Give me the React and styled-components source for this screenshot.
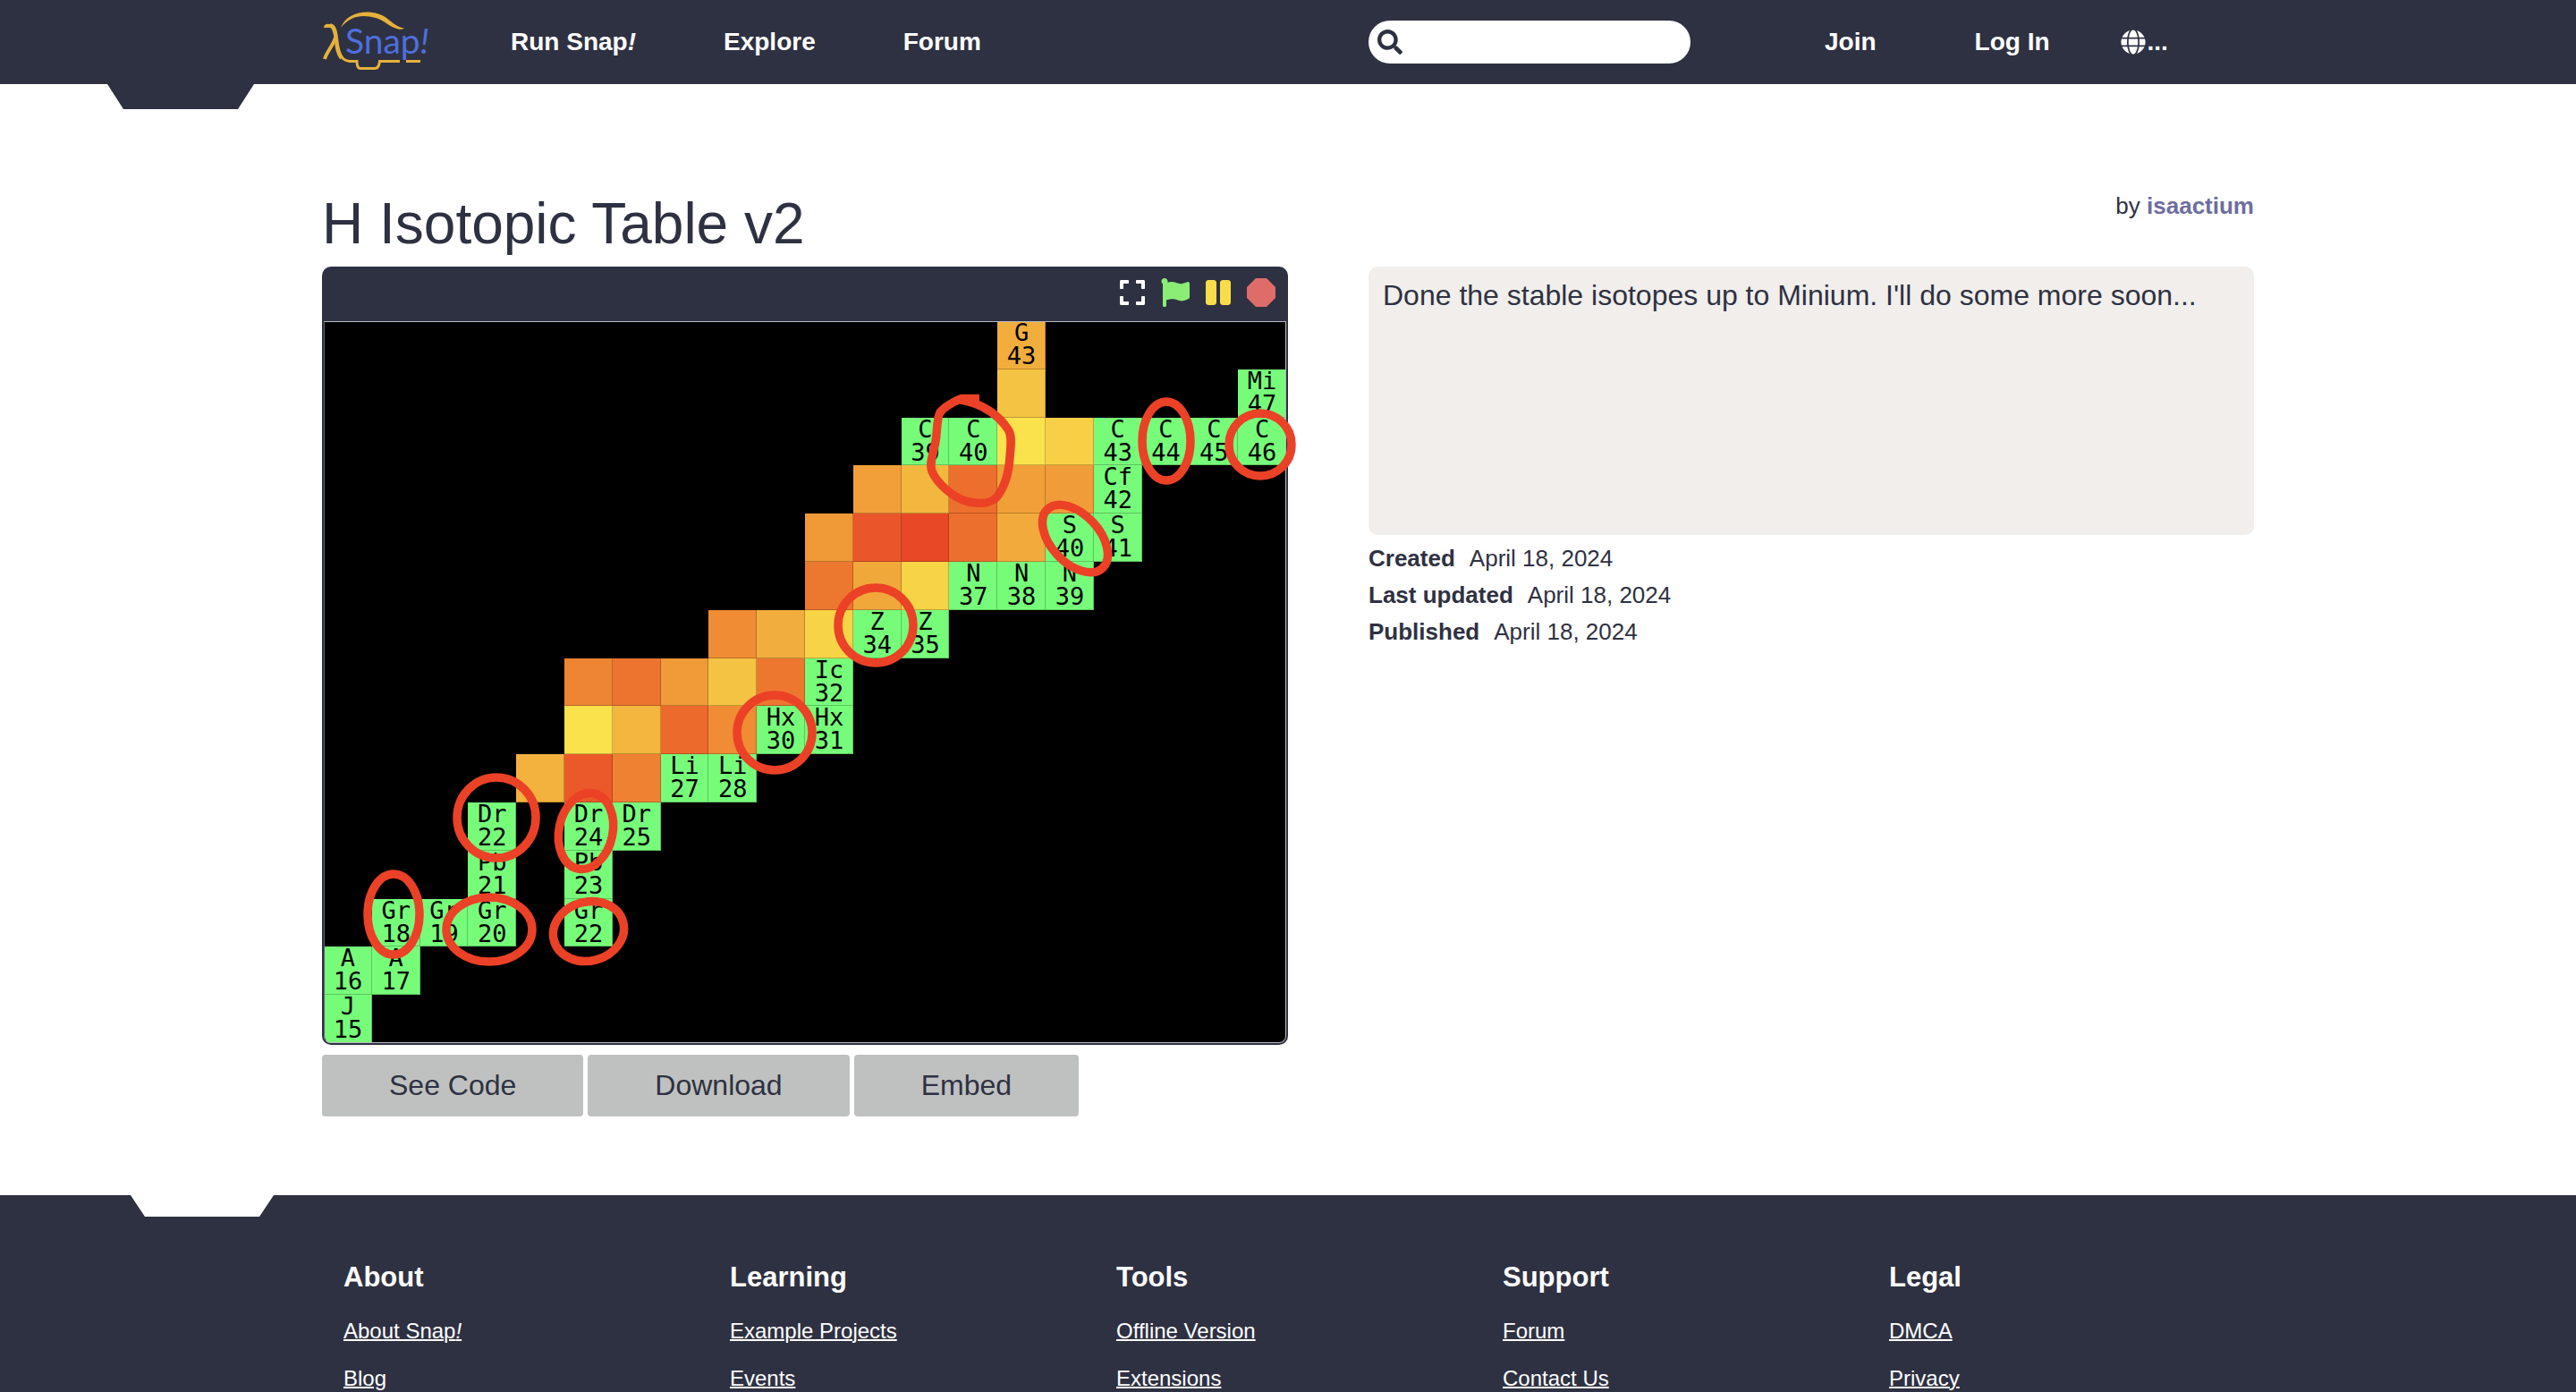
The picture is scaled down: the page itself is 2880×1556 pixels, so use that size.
import React from "react";
import styled, { createGlobalStyle } from "styled-components";
import { FaSearch, FaGlobe, FaExpand, FaFlag, FaPause } from "react-icons/fa";

const navy = "#2e3142";
const GREEN = "#77fc7a";

const GlobalStyle = createGlobalStyle`
  *, *::before, *::after { box-sizing: border-box; }
  body {
    margin: 0;
    background: #ffffff;
    color: ${navy};
    font-family: "Liberation Sans", Arial, Helvetica, sans-serif;
    font-size: 26px;
  }
  h1, h2, p, ul, dl, dd { margin: 0; padding: 0; }
  button, input { font: inherit; color: inherit; border: 0; }
`;

const Container = styled.div`
  width: 75%;
  margin: 0 auto;
`;

const Columns = styled(Container)`
  display: grid;
  grid-template-columns: 12fr 11fr;
  column-gap: 90px;
`;

/* ---------- header ---------- */

const Header = styled.header`
  position: relative;
  background: ${navy};
  color: #ffffff;
  font-size: 28px;
  font-weight: bold;

  &::after {
    content: "";
    position: absolute;
    top: 100%;
    left: 120px;
    width: 164px;
    height: 28px;
    background: ${navy};
    clip-path: polygon(0 0, 100% 0, calc(100% - 18px) 100%, 18px 100%);
  }
`;

const HeaderRow = styled(Columns)`
  height: 94px;
`;

const HeaderGroup = styled.div`
  display: flex;
  align-items: center;
`;

const LogoLink = styled.a`
  display: flex;
  margin-right: 94px;

  svg { overflow: visible; }
`;

const Nav = styled.nav`
  display: flex;
  gap: ${(p) => p.$gap};
`;

const NavLink = styled.a`
  color: #ffffff;
  text-decoration: none;
  white-space: nowrap;
`;

const SearchBox = styled.label`
  display: flex;
  align-items: center;
  width: 360px;
  height: 48px;
  padding: 0 10px;
  margin-right: 150px;
  border-radius: 24px;
  background: #ffffff;
  color: ${navy};

  svg { flex: none; }
`;

const SearchInput = styled.input`
  flex: 1;
  min-width: 0;
  padding: 0 10px;
  background: transparent;
  font-weight: normal;
  outline: none;
`;

const LanguageButton = styled.button`
  display: flex;
  align-items: center;
  gap: 2px;
  margin-left: 79px;
  padding: 0;
  background: transparent;
  color: #ffffff;
`;

/* ---------- project ---------- */

const Main = styled.main`
  padding: 118px 0 88px;
`;

const Title = styled.h1`
  margin-bottom: 10px;
  font-size: 64px;
  line-height: 76px;
  font-weight: normal;
`;

const Byline = styled.p`
  line-height: 36px;
  text-align: right;
`;

const AuthorLink = styled.a`
  color: #6e6d9f;
  font-weight: bold;
  text-decoration: none;
`;

const Player = styled.section`
  padding: 0 2px 2px;
  border-radius: 10px;
  background: ${navy};
`;

const PlayerBar = styled.div`
  display: flex;
  align-items: center;
  justify-content: flex-end;
  gap: 18px;
  height: 61px;
  padding: 0 12px 3px 0;
`;

const PlayerButton = styled.button`
  display: flex;
  padding: 0;
  background: transparent;
  color: ${(p) => p.$color};

  svg { width: ${(p) => p.$width}; height: 32px; }
`;

const Stage = styled.div`
  position: relative;
`;

const Board = styled.div`
  position: relative;
  display: grid;
  grid-template-columns: repeat(20, minmax(0, 1fr));
  grid-template-rows: repeat(15, minmax(0, 1fr));
  aspect-ratio: 4 / 3;
  border-radius: 0 0 8px 8px;
  background: #000000;

  &::after {
    content: "";
    position: absolute;
    inset: 0;
    border: 1px solid #b9babd;
    border-left-color: #5c5e66;
    border-radius: 0 0 8px 8px;
  }
`;

const Cell = styled.div`
  grid-column: ${(p) => p.$col + 1};
  grid-row: ${(p) => p.$row + 1};
  border-bottom-left-radius: ${(p) => (p.$row === 14 && p.$col === 0 ? "8px" : "0")};
  background: ${(p) => p.$color};
  box-shadow: inset -1px -1px 0 rgba(0, 0, 0, 0.22);
  color: #000000;
  font-family: "DejaVu Sans Mono", monospace;
  font-size: 27px;
  line-height: 26px;
  text-align: center;

  span { display: block; }
`;

const Marks = styled.svg`
  position: absolute;
  inset: 0;
  width: 100%;
  height: 100%;
  overflow: visible;
  pointer-events: none;
`;

const Actions = styled.div`
  display: flex;
  gap: 5px;
  margin-top: 11px;
`;

const ActionButton = styled.button`
  height: 69px;
  padding: 0 75px;
  border-radius: 4px;
  background: #bfc1c0;
  font-size: 32px;
`;

const Notes = styled.p`
  min-height: 300px;
  padding: 12px 16px;
  border-radius: 10px;
  background: #f1eeeb;
  font-size: 32px;
  line-height: 40px;
`;

const Dates = styled.dl`
  margin-top: 6px;
  line-height: 41px;
`;

const DateRow = styled.div`
  display: flex;
  gap: 16px;

  dt { font-weight: bold; }
`;

/* ---------- footer ---------- */

const Footer = styled.footer`
  position: relative;
  padding-top: 73px;
  background: ${navy};
  color: #ffffff;

  &::before {
    content: "";
    position: absolute;
    top: 0;
    left: 146px;
    width: 160px;
    height: 24px;
    background: #ffffff;
    clip-path: polygon(0 0, 100% 0, calc(100% - 16px) 100%, 16px 100%);
  }
`;

const FooterGrid = styled(Container)`
  display: grid;
  grid-template-columns: repeat(5, 1fr);
`;

const FooterColumn = styled.section`
  padding: 0 24px;
`;

const FooterHeading = styled.h2`
  margin-bottom: 27px;
  font-size: 31px;
  line-height: 37px;
`;

const FooterList = styled.ul`
  display: grid;
  gap: 23px;
  list-style: none;
  font-size: 24px;
  line-height: 30px;
`;

const FooterLink = styled.a`
  color: #ffffff;
  text-decoration: underline;
  text-decoration-thickness: 2px;
`;

/* ---------- data ---------- */

// [row, column, colour] for a plain cell, [row, column, symbol, mass] for a stable one
const heat = [
  [1, 14, "#f4c343"],
  [2, 14, "#f9e24c"], [2, 15, "#f8d045"],
  [3, 11, "#f19f38"], [3, 12, "#f3b73f"], [3, 13, "#ed6f2d"], [3, 14, "#f19f38"], [3, 15, "#f09c38"],
  [4, 10, "#ef9937"], [4, 11, "#ea562a"], [4, 12, "#e94826"], [4, 13, "#ec702d"], [4, 14, "#f1aa3b"],
  [5, 10, "#ec772f"], [5, 11, "#f1a83b"], [5, 12, "#f6d446"],
  [6, 8, "#ef8c34"], [6, 9, "#f1ae3e"], [6, 10, "#f6d446"],
  [7, 5, "#ee8533"], [7, 6, "#ec742f"], [7, 7, "#f09a38"], [7, 8, "#f4c343"], [7, 9, "#ed772f"],
  [8, 5, "#f9e24c"], [8, 6, "#f3b73f"], [8, 7, "#ec6a2c"], [8, 8, "#ef8c34"],
  [9, 4, "#f3b13e"], [9, 5, "#eb592a"], [9, 6, "#ee8132"],
];

const isotopes = [
  [0, 14, "G", 43, "#f2ae3d"],
  [1, 19, "Mi", 47],
  [2, 12, "C", 39], [2, 13, "C", 40], [2, 16, "C", 43], [2, 17, "C", 44], [2, 18, "C", 45], [2, 19, "C", 46],
  [3, 16, "Cf", 42],
  [4, 15, "S", 40], [4, 16, "S", 41],
  [5, 13, "N", 37], [5, 14, "N", 38], [5, 15, "N", 39],
  [6, 11, "Z", 34], [6, 12, "Z", 35],
  [7, 10, "Ic", 32],
  [8, 9, "Hx", 30], [8, 10, "Hx", 31],
  [9, 7, "Li", 27], [9, 8, "Li", 28],
  [10, 3, "Dr", 22], [10, 5, "Dr", 24], [10, 6, "Dr", 25],
  [11, 3, "Pb", 21], [11, 5, "Pb", 23],
  [12, 1, "Gr", 18], [12, 2, "Gr", 19], [12, 3, "Gr", 20], [12, 5, "Gr", 22],
  [13, 0, "A", 16], [13, 1, "A", 17],
  [14, 0, "J", 15],
];

// centre x, centre y, radius x, radius y, tilt
const rings = [
  [942, 134, 27, 44, 0],
  [1047, 138, 35, 35, 0],
  [840, 243, 45, 27, 47],
  [617, 340, 42, 42, 0],
  [504, 460, 42, 42, 0],
  [193, 555, 44, 45, 0],
  [293, 570, 30, 43, 12],
  [78, 663, 29, 45, 0],
  [185, 680, 48, 36, 0],
  [296, 682, 40, 33, -15],
];

const footerColumns = [
  ["About", [<>About Snap<i>!</i></>, "Blog"]],
  ["Learning", ["Example Projects", "Events"]],
  ["Tools", ["Offline Version", "Extensions"]],
  ["Support", ["Forum", "Contact Us"]],
  ["Legal", ["DMCA", "Privacy"]],
];

const dates = [
  ["Created", "April 18, 2024"],
  ["Last updated", "April 18, 2024"],
  ["Published", "April 18, 2024"],
];

function Logo() {
  return (
    <svg width="117" height="66" viewBox="0 0 117 66" role="img" aria-label="Snap!">
      <g fill="none" stroke="#e5b13c" strokeWidth="3">
        <path d="M4 17 C4 14 7 15 10 15" strokeWidth="4" />
        <path d="M8 15 C14 15 15 21 16 29 C17 42 20 54 31 54.500 H39 C39 59 40.500 62.500 43 62.500 H59 C62 62.500 64 59 64.500 54.500 H87" />
        <path d="M9 14.500 C14 15 15 22 16 30 C17 40 18 46 22 51" strokeWidth="4.500" />
        <path d="M15 28 C12 38 5 44 3 52" strokeWidth="4" />
        <path d="M94 54.500 H110" />
      </g>
      <path
        d="M21 17 C30 -5 60 -3 72 6 C80 12 85 17 92 17.500 C90 19 87 19 85 18.500 C75 16 70 9 60 6 C46 2 32 3 21 17 Z"
        fill="#e5b13c"
      />
      <text x="26" y="46" fill="#4f6fdc" fontFamily="Lato, sans-serif" fontSize="39" fontWeight="400">
        Snap<tspan fontStyle="italic">!</tspan>
      </text>
    </svg>
  );
}

function PlayerControls() {
  return (
    <PlayerBar>
      <PlayerButton type="button" aria-label="Full screen" $color="#ffffff" $width="28px"><FaExpand /></PlayerButton>
      <PlayerButton type="button" aria-label="Run" $color="#8bec76" $width="32px"><FaFlag /></PlayerButton>
      <PlayerButton type="button" aria-label="Pause" $color="#f9dc4a" $width="28px"><FaPause /></PlayerButton>
      <PlayerButton type="button" aria-label="Stop" $color="#de6c69" $width="32px">
        <svg viewBox="0 0 32 32"><path d="M10 0H22L32 10V22L22 32H10L0 22V10Z" fill="currentColor" /></svg>
      </PlayerButton>
    </PlayerBar>
  );
}

function IsotopeStage() {
  return (
    <Stage>
      <Board>
        {heat.map(([row, col, color]) => (
          <Cell key={`${row}-${col}`} $row={row} $col={col} $color={color} />
        ))}
        {isotopes.map(([row, col, symbol, mass, color = GREEN]) => (
          <Cell key={`${row}-${col}`} $row={row} $col={col} $color={color}>
            <span>{symbol}</span>
            <span>{mass}</span>
          </Cell>
        ))}
      </Board>
      <Marks viewBox="0 0 1076 807" aria-hidden="true">
        <g fill="none" stroke="#eb4126" strokeWidth="9.500">
          {rings.map(([cx, cy, rx, ry, tilt]) => (
            <ellipse key={`${cx}-${cy}`} cx={cx} cy={cy} rx={rx} ry={ry} transform={`rotate(${tilt} ${cx} ${cy})`} />
          ))}
          <path
            d="M733 86.500 H713 C706 89 693 96 689 102 C684 112 687 128 682 143 C680 153 677 160 680 168 C685 180 703 198 721 202 C735 205 747 203 753 196 C762 184 766 168 767 152 C768 140 770 128 765 121 C756 107 738 92 712 88"
            strokeLinejoin="round"
          />
        </g>
      </Marks>
    </Stage>
  );
}

export default function App() {
  return (
    <>
      <GlobalStyle />
      <Header>
        <HeaderRow>
          <HeaderGroup>
            <LogoLink href="#"><Logo /></LogoLink>
            <Nav $gap="98px">
              <NavLink href="#run">Run Snap<i>!</i></NavLink>
              <NavLink href="#explore">Explore</NavLink>
              <NavLink href="#forum">Forum</NavLink>
            </Nav>
          </HeaderGroup>
          <HeaderGroup>
            <SearchBox>
              <FaSearch size={28} />
              <SearchInput type="search" aria-label="Search" />
            </SearchBox>
            <Nav $gap="110px">
              <NavLink href="#join">Join</NavLink>
              <NavLink href="#login">Log In</NavLink>
            </Nav>
            <LanguageButton type="button" aria-label="Language"><FaGlobe size={28} />...</LanguageButton>
          </HeaderGroup>
        </HeaderRow>
      </Header>

      <Main>
        <Columns>
          <Title>H Isotopic Table v2</Title>
          <Byline>by <AuthorLink href="#isaactium">isaactium</AuthorLink></Byline>
          <div>
            <Player>
              <PlayerControls />
              <IsotopeStage />
            </Player>
            <Actions>
              <ActionButton type="button">See Code</ActionButton>
              <ActionButton type="button">Download</ActionButton>
              <ActionButton type="button">Embed</ActionButton>
            </Actions>
          </div>
          <div>
            <Notes>Done the stable isotopes up to Minium. I'll do some more soon...</Notes>
            <Dates>
              {dates.map(([label, value]) => (
                <DateRow key={label}><dt>{label}</dt><dd>{value}</dd></DateRow>
              ))}
            </Dates>
          </div>
        </Columns>
      </Main>

      <Footer>
        <FooterGrid>
          {footerColumns.map(([heading, links]) => (
            <FooterColumn key={heading}>
              <FooterHeading>{heading}</FooterHeading>
              <FooterList>
                {links.map((link, i) => (
                  <li key={i}><FooterLink href="#">{link}</FooterLink></li>
                ))}
              </FooterList>
            </FooterColumn>
          ))}
        </FooterGrid>
      </Footer>
    </>
  );
}
